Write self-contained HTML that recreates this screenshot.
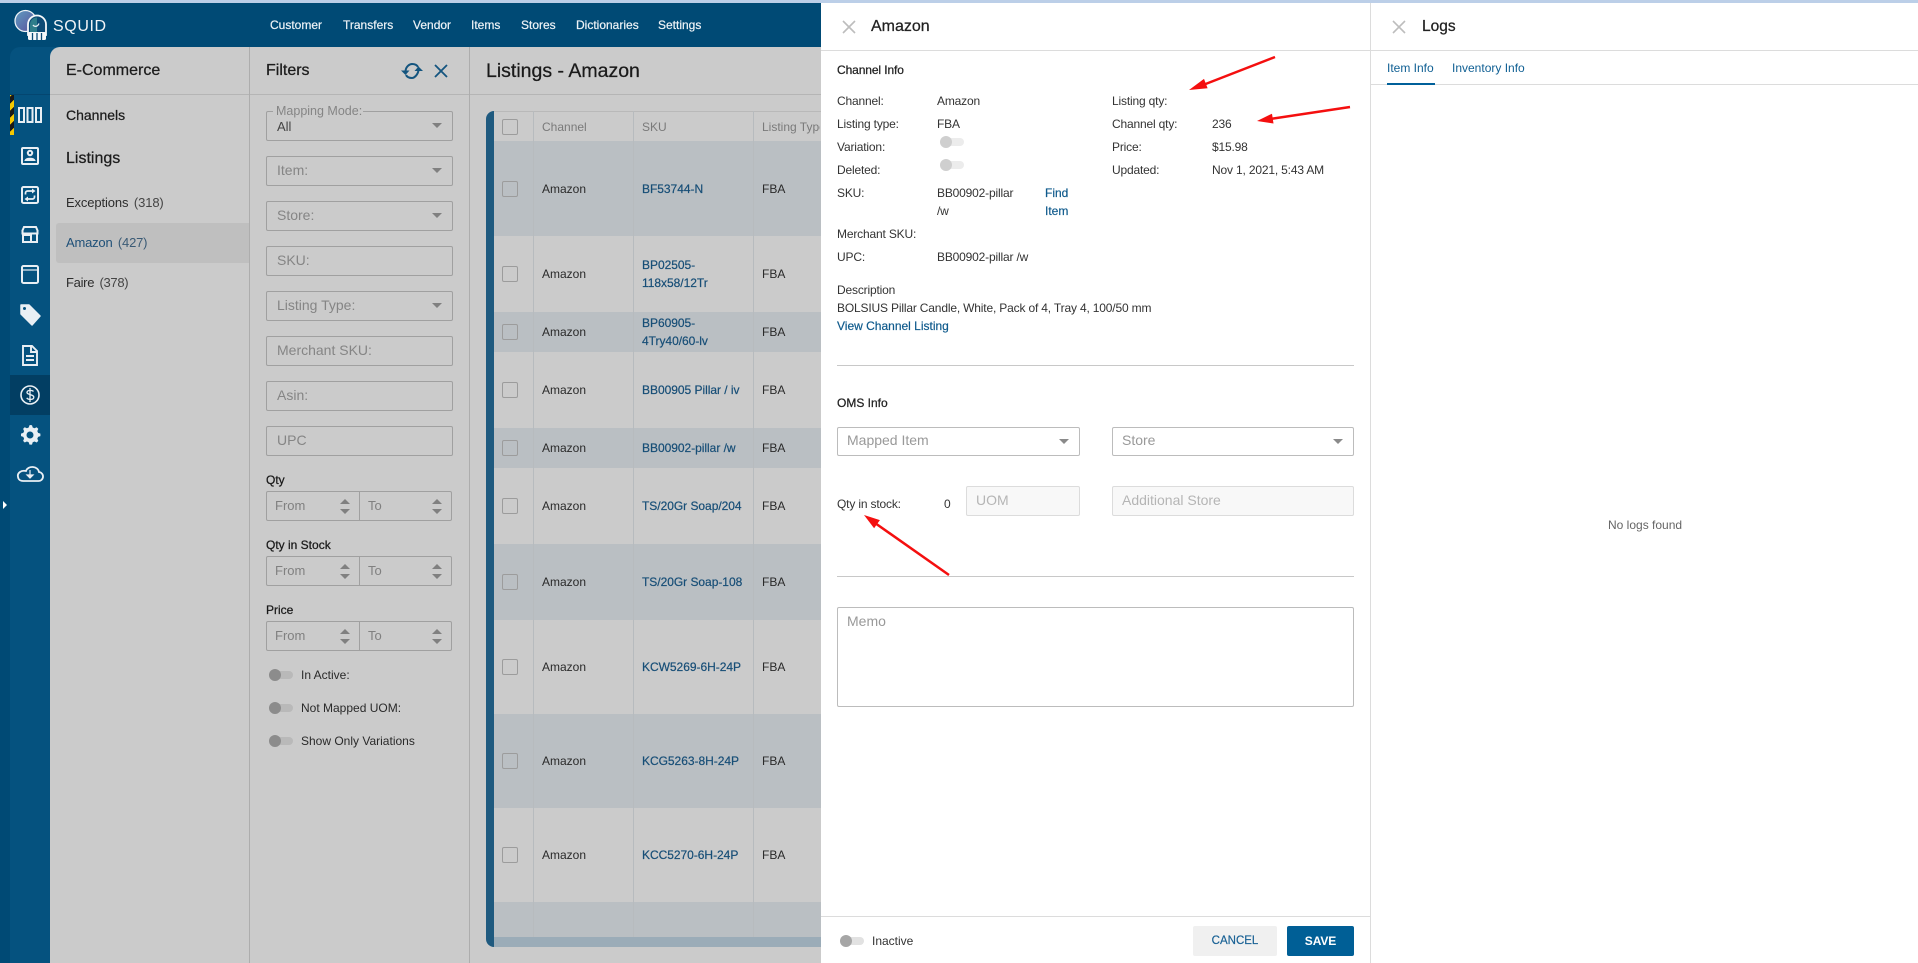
<!DOCTYPE html>
<html><head><meta charset="utf-8"><title>Squid</title>
<style>
html,body{margin:0;padding:0;background:#fff}
body{width:1918px;height:963px;position:relative;overflow:hidden;font-family:"Liberation Sans",Arial,sans-serif;font-size:12px;color:#222}
.a{position:absolute}
.t{position:absolute;white-space:nowrap;line-height:20px;height:20px}
.m{-webkit-text-stroke:.25px currentColor}
.nav{color:#eef3f7;font-size:12px;top:15px;-webkit-text-stroke:.2px #eef3f7}
.in{position:absolute;left:266px;width:185px;height:28px;border:1px solid #a0a0a0;border-radius:2px}
.ph{position:absolute;left:277px;font-size:14px;color:#858585;white-space:nowrap;line-height:20px}
.car{position:absolute;width:0;height:0;border-left:5px solid transparent;border-right:5px solid transparent;border-top:5px solid #808080}
.up{position:absolute;width:0;height:0;border-left:5px solid transparent;border-right:5px solid transparent;border-bottom:5px solid #808080}
.grp{position:absolute;left:266px;width:184px;height:28px;border:1px solid #a0a0a0;border-radius:2px}
.grp i{position:absolute;left:92px;top:0;width:1px;height:28px;background:#a0a0a0}
.lb{left:266px;font-size:12px;color:#1a1a1a;-webkit-text-stroke:.25px #1a1a1a}
.ft{font-size:13px;color:#808080}
.row{position:absolute;left:494px;width:327px}
.cb{position:absolute;left:502px;width:14px;height:14px;border:1px solid #9c9c9c;border-radius:2px}
.c1{left:542px;font-size:12px;color:#2a2a2a}
.c2{left:642px;font-size:12px;color:#174e77;-webkit-text-stroke:.2px #174e77;letter-spacing:-.03px}
.c3{left:762px;font-size:12px;color:#2a2a2a}
.vl{position:absolute;top:111px;height:826px;width:1px;background:#b7bbbe}
.tg{position:absolute;width:24px;height:8px;border-radius:4px}
.tg b{position:absolute;left:0;top:-2px;width:12px;height:12px;border-radius:50%}
.f{font-size:12px;color:#333;letter-spacing:-.17px}
.l{color:#0f5a8c;-webkit-text-stroke:.2px #0f5a8c}
.box{position:absolute;border:1px solid #b5b5b5;border-radius:2px;background:#fff;box-sizing:border-box}
</style></head>
<body>
<!-- base -->
<div class="a" style="left:0;top:0;width:1918px;height:3px;background:#bccfe8"></div>
<div class="a" style="left:0;top:3px;width:821px;height:960px;background:#004a75"></div>
<div class="a" style="left:10px;top:47px;width:60px;height:916px;background:#05527f;border-top-left-radius:10px"></div>
<div class="a" style="left:50px;top:47px;width:771px;height:916px;background:#cbcbcb;border-top-left-radius:10px"></div>
<div class="a" style="left:10px;top:94px;width:40px;height:1px;background:#044670"></div>
<div class="a" style="left:10px;top:375px;width:40px;height:40px;background:#023e63"></div>
<!-- stripes -->
<div class="a" style="left:10px;top:95px;width:4px;height:40px;background:repeating-linear-gradient(-45deg,#f5c800 0 5px,#1a1a1a 5px 10px)"></div>
<!-- logo -->
<svg class="a" style="left:14px;top:9px" width="34" height="32" viewBox="0 0 34 32">
<defs><linearGradient id="g" x1="0" y1="0" x2="1" y2="1"><stop offset="0" stop-color="#5f9cc0"/><stop offset="1" stop-color="#5a4f9c"/></linearGradient></defs>
<circle cx="11.500" cy="12" r="10.500" fill="url(#g)" stroke="#eef3f7" stroke-width="1.300"/>
<path d="M14 26V15.500a9 9 0 0 1 18 0V26z" fill="#0d4a75" stroke="#f6f8fa" stroke-width="1.800"/>
<path d="M23 8.500a7 7 0 0 0-7 7v8h7z" fill="#2f7d8a"/>
<path d="M19 16c1.500 2 4.500 2 6-1.500" fill="none" stroke="#e8eef2" stroke-width="1.300"/>
<rect x="14" y="23" width="18" height="8" rx="1.500" fill="#f6f8fa"/>
<path d="M18.500 24v7M23 24v7M27.500 24v7" stroke="#0d4a75" stroke-width="1.300"/>
</svg>
<div class="t" style="left:53px;top:17px;font-size:16px;color:#f1f4f7;letter-spacing:.6px">SQUID</div>
<!-- nav -->
<div class="t nav" style="left:270px">Customer</div>
<div class="t nav" style="left:343px">Transfers</div>
<div class="t nav" style="left:413px">Vendor</div>
<div class="t nav" style="left:471px">Items</div>
<div class="t nav" style="left:521px">Stores</div>
<div class="t nav" style="left:576px">Dictionaries</div>
<div class="t nav" style="left:658px">Settings</div>
<!-- side icons -->
<svg class="a" style="left:10px;top:94px" width="40" height="400" viewBox="0 0 40 400" fill="none" stroke="#e9eff4" stroke-width="2">
<rect x="9" y="14" width="5" height="14"/><rect x="17.500" y="14" width="5" height="14"/><rect x="26" y="14" width="5" height="14"/>
<rect x="12" y="54" width="16" height="16" rx="1"/><circle cx="20" cy="59" r="2.200"/><path d="M15 66.500c1-3 9-3 10 0z" fill="#e9eff4" stroke-width="1"/>
<rect x="12" y="93" width="16" height="16" rx="1.500"/><path d="M15.500 100.500V99a2 2 0 0 1 2-2h5M24.500 101.500v1.500a2 2 0 0 1-2 2h-5" stroke-width="1.700"/><path d="M22 94.500l3.500 2.500-3.500 2.500zM18 102.500L14.500 105l3.500 2.500z" fill="#e9eff4" stroke="none"/>
<path d="M12.500 139.500v-3l1.500-3.500h12l1.500 3.500v3zM13 139.500v8.500h14v-8.500M14 141h7v7" stroke-width="2"/>
<rect x="12" y="172" width="16" height="17" rx="1.500"/><path d="M12 176h16" stroke-width="1.200"/>
<path d="M11 211h8l11 11-8 9-11-11z" fill="#e9eff4" stroke-linejoin="round" stroke-width="1.500"/><circle cx="14.500" cy="214.500" r="1.500" fill="#05527f" stroke="none"/>
<path d="M13 252h9l5 5v14H13zM16 262h8M16 266h8M21 252v6h6" stroke-width="1.900"/>
<circle cx="20" cy="301" r="9" stroke-width="1.600"/><path d="M23.500 297.500c-1-1.500-6-1.800-6.500 .8s7 2 6.800 5-6 2.500-7 .5M20 294v14" stroke-width="1.300"/>
<path d="M20 331.500l2 .2.700 2.300 1.800.8 2.200-1 1.600 1.600-1 2.200.8 1.800 2.300.7v2.500l-2.300.8-.8 1.800 1 2.200-1.600 1.600-2.200-1-1.800.8-.7 2.300h-2.500l-.8-2.300-1.800-.8-2.200 1-1.600-1.600 1-2.200-.8-1.800-2.300-.8v-2.500l2.300-.7.8-1.800-1-2.200 1.600-1.600 2.200 1 1.800-.8.800-2.300z" transform="translate(0 -.5)" fill="#e9eff4" stroke="none"/><circle cx="20" cy="341" r="3.500" fill="#05527f" stroke="none"/>
<path d="M13 387h15a4.500 4.500 0 0 0 1-9c-1-6-11-7-13-1-5-1-9 2-8 6 .5 3 3 4 5 4z" stroke-width="1.800"/><path d="M20 376v6M17 381h6l-3 3z" fill="#e9eff4" stroke-width="1.200"/>
</svg>
<div class="a" style="left:3px;top:501px;width:0;height:0;border-top:4px solid transparent;border-bottom:4px solid transparent;border-left:4px solid #fff"></div>
<!-- E-commerce col -->
<div class="t m" style="left:66px;top:61px;font-size:16px;color:#1c1c1c">E-Commerce</div>
<div class="a" style="left:50px;top:94px;width:771px;height:1px;background:#b5b5b5"></div>
<div class="t m" style="left:66px;top:105px;font-size:14px;color:#1c1c1c">Channels</div>
<div class="t m" style="left:66px;top:149px;font-size:16px;color:#1c1c1c">Listings</div>
<div class="t" style="left:66px;top:193px;font-size:13px;color:#2c2c2c;letter-spacing:-.12px">Exceptions <span style="margin-left:2px;color:#444">(318)</span></div>
<div class="a" style="left:56px;top:223px;width:193px;height:40px;background:#bfbfbf;border-radius:3px 0 0 3px"></div>
<div class="t" style="left:66px;top:233px;font-size:13px;color:#1f5078;letter-spacing:-.2px">Amazon <span style="margin-left:2px;color:#3a5a75">(427)</span></div>
<div class="t" style="left:66px;top:273px;font-size:13px;color:#2c2c2c;letter-spacing:-.3px">Faire <span style="margin-left:2px;color:#444">(378)</span></div>
<div class="a" style="left:249px;top:47px;width:1px;height:916px;background:#adadad"></div>
<div class="a" style="left:469px;top:47px;width:1px;height:916px;background:#adadad"></div>
<!-- filters -->
<div class="t m" style="left:266px;top:61px;font-size:16px;color:#1c1c1c">Filters</div>
<svg class="a" style="left:401px;top:61px" width="22" height="20" viewBox="0 0 22 20" fill="none" stroke="#14557f" stroke-width="2">
<path d="M4.500 10C5 5 9 3 11 3c3 0 5 1 6 3"/><path d="M17.500 9C17 14 13 17 11 17c-3 0-5-1-6-3"/><path d="M0 9.500h8.500L4.500 14z" fill="#14557f" stroke="none"/><path d="M13.500 10H22l-4.500-4.500z" fill="#14557f" stroke="none"/>
</svg>
<svg class="a" style="left:434px;top:64px" width="14" height="14" viewBox="0 0 14 14" stroke="#14557f" stroke-width="1.800"><path d="M1 1l12 12M13 1L1 13"/></svg>

<div class="in" style="top:111px"></div>
<div class="a" style="left:273px;top:105px;width:90px;height:12px;background:#cbcbcb"></div>
<div class="t" style="left:276px;top:101px;font-size:12.500px;color:#858585">Mapping Mode:</div>
<div class="t" style="left:277px;top:116px;font-size:13px;color:#444;margin-top:1px">All</div>
<div class="car" style="left:432px;top:123px"></div>

<div class="in" style="top:156px"></div><div class="ph" style="top:160px">Item:</div><div class="car" style="left:432px;top:168px"></div>
<div class="in" style="top:201px"></div><div class="ph" style="top:205px">Store:</div><div class="car" style="left:432px;top:213px"></div>
<div class="in" style="top:246px"></div><div class="ph" style="top:250px">SKU:</div>
<div class="in" style="top:291px"></div><div class="ph" style="top:295px">Listing Type:</div><div class="car" style="left:432px;top:303px"></div>
<div class="in" style="top:336px"></div><div class="ph" style="top:340px">Merchant SKU:</div>
<div class="in" style="top:381px"></div><div class="ph" style="top:385px">Asin:</div>
<div class="in" style="top:426px"></div><div class="ph" style="top:430px">UPC</div>

<div class="t lb" style="top:470px">Qty</div>
<div class="grp" style="top:491px"><i></i></div>
<div class="t ft" style="left:275px;top:496px">From</div><div class="t ft" style="left:368px;top:496px">To</div>
<div class="up" style="left:340px;top:499px"></div><div class="car" style="left:340px;top:509px"></div>
<div class="up" style="left:432px;top:499px"></div><div class="car" style="left:432px;top:509px"></div>

<div class="t lb" style="top:535px">Qty in Stock</div>
<div class="grp" style="top:556px"><i></i></div>
<div class="t ft" style="left:275px;top:561px">From</div><div class="t ft" style="left:368px;top:561px">To</div>
<div class="up" style="left:340px;top:564px"></div><div class="car" style="left:340px;top:574px"></div>
<div class="up" style="left:432px;top:564px"></div><div class="car" style="left:432px;top:574px"></div>

<div class="t lb" style="top:600px">Price</div>
<div class="grp" style="top:621px"><i></i></div>
<div class="t ft" style="left:275px;top:626px">From</div><div class="t ft" style="left:368px;top:626px">To</div>
<div class="up" style="left:340px;top:629px"></div><div class="car" style="left:340px;top:639px"></div>
<div class="up" style="left:432px;top:629px"></div><div class="car" style="left:432px;top:639px"></div>

<div class="tg" style="left:269px;top:671px;background:#b9b9b9"><b style="background:#8c8c8c"></b></div>
<div class="t" style="left:301px;top:665px;font-size:12px;color:#2a2a2a">In Active:</div>
<div class="tg" style="left:269px;top:704px;background:#b9b9b9"><b style="background:#8c8c8c"></b></div>
<div class="t" style="left:301px;top:698px;font-size:12px;color:#2a2a2a">Not Mapped UOM:</div>
<div class="tg" style="left:269px;top:737px;background:#b9b9b9"><b style="background:#8c8c8c"></b></div>
<div class="t" style="left:301px;top:731px;font-size:12px;color:#2a2a2a">Show Only Variations</div>

<!-- listings -->
<div class="t m" style="left:486px;top:61px;font-size:19.500px;color:#1a1a1a">Listings - Amazon</div>
<div class="a" style="left:486px;top:111px;width:20px;height:836px;background:#1f5a7f;border-radius:8px 0 0 8px"></div>
<div class="a" style="left:494px;top:111px;width:327px;height:30px;background:#cbcbcb;border-top:1px solid #b9b9b9;box-sizing:border-box"></div>
<div class="row" style="top:141px;height:95px;background:#babfc3"></div>
<div class="row" style="top:236px;height:76px;background:#cbcbcb"></div>
<div class="row" style="top:312px;height:40px;background:#babfc3"></div>
<div class="row" style="top:352px;height:76px;background:#cbcbcb"></div>
<div class="row" style="top:428px;height:40px;background:#babfc3"></div>
<div class="row" style="top:468px;height:76px;background:#cbcbcb"></div>
<div class="row" style="top:544px;height:76px;background:#babfc3"></div>
<div class="row" style="top:620px;height:94px;background:#cbcbcb"></div>
<div class="row" style="top:714px;height:94px;background:#babfc3"></div>
<div class="row" style="top:808px;height:94px;background:#cbcbcb"></div>
<div class="row" style="top:902px;height:35px;background:#babfc3"></div>
<div class="row" style="top:937px;height:10px;background:#9bacb8"></div>
<div class="vl" style="left:533px"></div><div class="vl" style="left:633px"></div><div class="vl" style="left:753px"></div>

<div class="cb" style="top:119px"></div>
<div class="t" style="left:542px;top:117px;font-size:12px;color:#7a7a7a">Channel</div>
<div class="t" style="left:642px;top:117px;font-size:12px;color:#7a7a7a">SKU</div>
<div class="t" style="left:762px;top:117px;font-size:12px;color:#7a7a7a;width:58px;overflow:hidden">Listing Type</div>

<div class="cb" style="top:181px"></div><div class="t c1" style="top:179px">Amazon</div><div class="t c2" style="top:179px">BF53744-N</div><div class="t c3" style="top:179px">FBA</div>
<div class="cb" style="top:266px"></div><div class="t c1" style="top:264px">Amazon</div><div class="t c2" style="top:255px">BP02505-</div><div class="t c2" style="top:273px">118x58/12Tr</div><div class="t c3" style="top:264px">FBA</div>
<div class="cb" style="top:324px"></div><div class="t c1" style="top:322px">Amazon</div><div class="t c2" style="top:313px">BP60905-</div><div class="t c2" style="top:331px">4Try40/60-lv</div><div class="t c3" style="top:322px">FBA</div>
<div class="cb" style="top:382px"></div><div class="t c1" style="top:380px">Amazon</div><div class="t c2" style="top:380px">BB00905 Pillar / iv</div><div class="t c3" style="top:380px">FBA</div>
<div class="cb" style="top:440px"></div><div class="t c1" style="top:438px">Amazon</div><div class="t c2" style="top:438px">BB00902-pillar /w</div><div class="t c3" style="top:438px">FBA</div>
<div class="cb" style="top:498px"></div><div class="t c1" style="top:496px">Amazon</div><div class="t c2" style="top:496px">TS/20Gr Soap/204</div><div class="t c3" style="top:496px">FBA</div>
<div class="cb" style="top:574px"></div><div class="t c1" style="top:572px">Amazon</div><div class="t c2" style="top:572px">TS/20Gr Soap-108</div><div class="t c3" style="top:572px">FBA</div>
<div class="cb" style="top:659px"></div><div class="t c1" style="top:657px">Amazon</div><div class="t c2" style="top:657px">KCW5269-6H-24P</div><div class="t c3" style="top:657px">FBA</div>
<div class="cb" style="top:753px"></div><div class="t c1" style="top:751px">Amazon</div><div class="t c2" style="top:751px">KCG5263-8H-24P</div><div class="t c3" style="top:751px">FBA</div>
<div class="cb" style="top:847px"></div><div class="t c1" style="top:845px">Amazon</div><div class="t c2" style="top:845px">KCC5270-6H-24P</div><div class="t c3" style="top:845px">FBA</div>

<!-- panel 1 -->
<div class="a" style="left:821px;top:3px;width:1097px;height:960px;background:#fff"></div>
<div class="a" style="left:821px;top:50px;width:1097px;height:1px;background:#dcdcdc"></div>
<div class="a" style="left:1370px;top:3px;width:1px;height:960px;background:#dcdcdc"></div>
<svg class="a" style="left:842px;top:20px" width="14" height="14" viewBox="0 0 14 14" stroke="#bdbdbd" stroke-width="1.600"><path d="M1 1l12 12M13 1L1 13"/></svg>
<div class="t m" style="left:871px;top:17px;font-size:16px;color:#222">Amazon</div>
<div class="t m" style="left:837px;top:60px;font-size:12px;color:#222;letter-spacing:-.1px">Channel Info</div>

<div class="t f" style="left:837px;top:91px">Channel:</div><div class="t f" style="left:937px;top:91px">Amazon</div>
<div class="t f" style="left:837px;top:114px">Listing type:</div><div class="t f" style="left:937px;top:114px">FBA</div>
<div class="t f" style="left:837px;top:137px">Variation:</div>
<div class="tg" style="left:940px;top:138px;background:#ececec"><b style="background:#cfcfcf"></b></div>
<div class="t f" style="left:837px;top:160px">Deleted:</div>
<div class="tg" style="left:940px;top:161px;background:#ececec"><b style="background:#cfcfcf"></b></div>
<div class="t f" style="left:837px;top:183px">SKU:</div><div class="t f" style="left:937px;top:183px">BB00902-pillar</div><div class="t f" style="left:937px;top:201px">/w</div>
<div class="t l" style="left:1045px;top:183px">Find</div><div class="t l" style="left:1045px;top:201px">Item</div>
<div class="t f" style="left:837px;top:224px">Merchant SKU:</div>
<div class="t f" style="left:837px;top:247px">UPC:</div><div class="t f" style="left:937px;top:247px">BB00902-pillar /w</div>
<div class="t f" style="left:1112px;top:91px">Listing qty:</div>
<div class="t f" style="left:1112px;top:114px">Channel qty:</div><div class="t f" style="left:1212px;top:114px">236</div>
<div class="t f" style="left:1112px;top:137px">Price:</div><div class="t f" style="left:1212px;top:137px">$15.98</div>
<div class="t f" style="left:1112px;top:160px">Updated:</div><div class="t f" style="left:1212px;top:160px">Nov 1, 2021, 5:43 AM</div>
<div class="t f" style="left:837px;top:280px">Description</div>
<div class="t f" style="left:837px;top:298px">BOLSIUS Pillar Candle, White, Pack of 4, Tray 4, 100/50 mm</div>
<div class="t l" style="left:837px;top:316px">View Channel Listing</div>
<div class="a" style="left:837px;top:365px;width:517px;height:1px;background:#c8c8c8"></div>
<div class="t m" style="left:837px;top:393px;font-size:12px;color:#222">OMS Info</div>

<div class="box" style="left:837px;top:427px;width:243px;height:29px;border-color:#bcbcbc"></div>
<div class="t" style="left:847px;top:430px;font-size:14px;color:#999">Mapped Item</div>
<div class="car" style="left:1059px;top:439px;border-top-color:#8a8a8a"></div>
<div class="box" style="left:1112px;top:427px;width:242px;height:29px;border-color:#bcbcbc"></div>
<div class="t" style="left:1122px;top:430px;font-size:14px;color:#999">Store</div>
<div class="car" style="left:1333px;top:439px;border-top-color:#8a8a8a"></div>

<div class="t f" style="left:837px;top:494px">Qty in stock:</div>
<div class="t f" style="left:944px;top:494px">0</div>
<div class="box" style="left:966px;top:486px;width:114px;height:30px;background:#f8f8f8;border-color:#dcdcdc"></div>
<div class="t" style="left:976px;top:490px;font-size:14px;color:#b5b5b5">UOM</div>
<div class="box" style="left:1112px;top:486px;width:242px;height:30px;background:#f8f8f8;border-color:#dcdcdc"></div>
<div class="t" style="left:1122px;top:490px;font-size:14px;color:#b5b5b5">Additional Store</div>
<div class="a" style="left:837px;top:576px;width:517px;height:1px;background:#c8c8c8"></div>
<div class="box" style="left:837px;top:607px;width:517px;height:100px;border-color:#bcbcbc"></div>
<div class="t" style="left:847px;top:611px;font-size:14px;color:#999">Memo</div>

<div class="a" style="left:821px;top:916px;width:549px;height:1px;background:#dcdcdc"></div>
<div class="tg" style="left:840px;top:937px;background:#e2e2e2"><b style="background:#a6a6a6"></b></div>
<div class="t" style="left:872px;top:931px;font-size:12px;color:#333">Inactive</div>
<div class="a" style="left:1193px;top:926px;width:84px;height:30px;background:#f0f0f0;border-radius:2px;text-align:center;line-height:31px;font-size:11.500px;color:#1a6295;-webkit-text-stroke:.2px #1a6295">CANCEL</div>
<div class="a" style="left:1287px;top:926px;width:67px;height:30px;background:#005f96;border-radius:2px;text-align:center;line-height:30px;font-size:12px;font-weight:700;color:#fff;letter-spacing:-.1px">SAVE</div>

<!-- panel 2 -->
<svg class="a" style="left:1392px;top:20px" width="14" height="14" viewBox="0 0 14 14" stroke="#bdbdbd" stroke-width="1.600"><path d="M1 1l12 12M13 1L1 13"/></svg>
<div class="t m" style="left:1422px;top:17px;font-size:15.500px;color:#222">Logs</div>
<div class="a" style="left:1371px;top:84px;width:547px;height:1px;background:#dcdcdc"></div>
<div class="t" style="left:1387px;top:58px;font-size:12px;color:#0f5f93">Item Info</div>
<div class="t" style="left:1452px;top:58px;font-size:12px;color:#0f5f93">Inventory Info</div>
<div class="a" style="left:1387px;top:83px;width:48px;height:2px;background:#00609a"></div>
<div class="t" style="left:1608px;top:515px;font-size:12px;color:#666">No logs found</div>

<!-- arrows -->
<svg class="a" style="left:0;top:0" width="1918" height="963">
<line x1="1275" y1="57" x2="1203" y2="85" stroke="#f40f0f" stroke-width="2.500"/>
<polygon points="1189,90 1207.600,88.300 1204,78.900" fill="#f40f0f"/>
<line x1="1350" y1="107" x2="1270" y2="119" stroke="#f40f0f" stroke-width="2.500"/>
<polygon points="1257,121 1273.500,123.500 1272,113.700" fill="#f40f0f"/>
<line x1="949" y1="575" x2="875" y2="523" stroke="#f40f0f" stroke-width="2.500"/>
<polygon points="864,515 879.900,520.100 874.100,528.300" fill="#f40f0f"/>
</svg>
</body></html>
